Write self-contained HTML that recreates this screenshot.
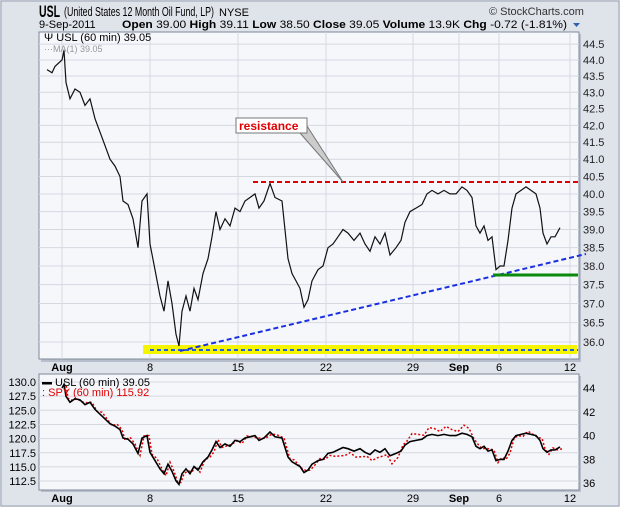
<!DOCTYPE html><html><head><style>
body{margin:0;width:620px;height:507px;background:#dfe3ea;font-family:"Liberation Sans",sans-serif;overflow:hidden}
svg{position:absolute;left:0;top:0}
</style></head><body>
<svg width="620" height="507" id="s" xmlns="http://www.w3.org/2000/svg" font-family="Liberation Sans, sans-serif">
<rect x="0" y="0" width="620" height="507" fill="#dfe3ea"/>
<rect x="1" y="1" width="618" height="505" fill="none" stroke="#9aa3b2"/>
<text x="39" y="17" font-size="17" font-weight="bold" fill="#000" textLength="21" lengthAdjust="spacingAndGlyphs">USL</text>
<text x="64" y="16" font-size="13" fill="#000" textLength="150" lengthAdjust="spacingAndGlyphs">(United States 12 Month Oil Fund, LP)</text>
<text x="219" y="16" font-size="11" fill="#000">NYSE</text>
<text x="489" y="15" font-size="11" fill="#333">© StockCharts.com</text>
<text x="39" y="28" font-size="11">9-Sep-2011</text>
<text x="122" y="28" font-size="11" textLength="445" lengthAdjust="spacingAndGlyphs"><tspan font-weight="bold">Open</tspan> 39.00 <tspan font-weight="bold">High</tspan> 39.11 <tspan font-weight="bold">Low</tspan> 38.50 <tspan font-weight="bold">Close</tspan> 39.05 <tspan font-weight="bold">Volume</tspan> 13.9K <tspan font-weight="bold">Chg</tspan> -0.72 (-1.81%)</text>
<path d="M573 23h7l-3.5 4z" fill="#3060b0"/>
<g id="up"></g>
<g id="lo"></g>
</svg>
<script>
const NS="http://www.w3.org/2000/svg";
function el(p,t,a,txt){const e=document.createElementNS(NS,t);for(const k in a)e.setAttribute(k,a[k]);if(txt!=null)e.textContent=txt;p.appendChild(e);return e;}
const up=document.getElementById('up'),lo=document.getElementById('lo');
const L=39,R=579;
const xs=[[62,'Aug',1],[150,'8'],[238,'15'],[326,'22'],[413,'29'],[459,'Sep',1],[499,'6'],[570,'12']];
el(up,'rect',{x:L+2,y:34,width:R-L,height:328,fill:'#b8bfcc'});
el(up,'rect',{x:L,y:32,width:R-L,height:327,fill:'#f6f7fb',stroke:'#7f8898'});
const Y=p=>5379.4-1405.7*Math.log(p);
for(let p=36;p<=44.51;p+=0.5){const y=Y(p);el(up,'line',{x1:L,x2:R,y1:y,y2:y,stroke:'#d4d8e0'});el(up,'text',{x:583,y:y+4,'font-size':11,fill:'#222'},p.toFixed(1));}
xs.forEach(a=>{el(up,'line',{x1:a[0],x2:a[0],y1:32,y2:359,stroke:'#d4d8e0'});el(up,'text',{x:a[0],y:371,'font-size':11,'text-anchor':'middle','font-weight':a[2]?'bold':'normal'},a[1]);
el(lo,'line',{x1:a[0],x2:a[0],y1:374,y2:490,stroke:'#d4d8e0'});el(lo,'text',{x:a[0],y:502,'font-size':11,'text-anchor':'middle','font-weight':a[2]?'bold':'normal'},a[1]);});
el(up,'rect',{x:143,y:345,width:434,height:9,fill:'#f5f500'});
el(up,'line',{x1:150,x2:578,y1:350,y2:350,stroke:'#2060e0','stroke-width':2,'stroke-dasharray':'4 3'});
const pr=[[47,43.7],[52,43.6],[55,43.8],[62,44.0],[64,44.3],[66,43.3],[70,42.8],[75,43.1],[80,43.0],[85,42.6],[90,42.8],[95,42.2],[100,41.8],[105,41.4],[110,41.0],[115,40.8],[120,40.5],[123,39.8],[128,39.7],[133,39.3],[138,38.5],[142,39.8],[147,40.0],[150,38.6],[155,37.9],[160,37.2],[164,36.8],[168,37.6],[172,37.0],[176,36.2],[179,35.9],[182,36.8],[186,37.2],[190,36.8],[194,37.4],[198,37.1],[203,37.8],[208,38.2],[212,38.8],[216,39.5],[220,39.0],[225,39.3],[230,39.1],[235,39.6],[240,39.5],[245,39.8],[250,39.9],[255,40.0],[259,39.6],[264,39.8],[270,40.3],[275,39.9],[282,39.8],[288,38.2],[292,37.8],[296,37.6],[300,37.4],[304,36.9],[308,37.1],[312,37.6],[318,37.9],[323,38.0],[328,38.5],[333,38.6],[338,38.8],[343,39.0],[348,38.9],[354,38.7],[360,38.9],[365,38.6],[370,38.4],[375,38.8],[380,38.6],[385,38.9],[390,38.3],[396,38.5],[401,38.7],[405,39.2],[410,39.5],[416,39.6],[422,39.7],[427,40.0],[432,40.1],[438,40.0],[444,40.1],[450,40.0],[456,40.0],[462,40.2],[467,40.1],[472,39.9],[476,39.1],[480,38.9],[484,39.1],[488,38.7],[492,38.8],[496,37.9],[500,38.0],[504,38.0],[508,38.7],[512,39.6],[516,40.0],[521,40.1],[526,40.2],[531,40.1],[536,40.0],[540,39.6],[543,38.9],[547,38.6],[551,38.8],[555,38.8],[560,39.05]];
el(up,'polyline',{points:pr.map(q=>q[0]+','+Y(q[1]).toFixed(1)).join(' '),fill:'none',stroke:'#111','stroke-width':1.2});
el(up,'line',{x1:253,x2:578,y1:182,y2:182,stroke:'#e00000','stroke-width':2,'stroke-dasharray':'5 3'});
el(up,'line',{x1:180,x2:586,y1:351,y2:254,stroke:'#1a30e0','stroke-width':2,'stroke-dasharray':'5 3'});
el(up,'line',{x1:493,x2:578,y1:275,y2:275,stroke:'#0a8a0a','stroke-width':3});
el(up,'path',{d:'M300 133L343 182L307 126',fill:'#ccc',stroke:'#777'});
el(up,'rect',{x:236,y:118,width:71,height:15,fill:'#fff',stroke:'#777'});
el(up,'text',{x:239,y:130,'font-size':12,'font-weight':'bold',fill:'#e00000'},'resistance');
el(up,'text',{x:44,y:41,'font-size':11},'\u03A8 USL (60 min) 39.05');
el(up,'text',{x:44,y:52,'font-size':9,fill:'#999'},'\u00B7\u00B7\u00B7MA(1) 39.05');
el(lo,'rect',{x:L+2,y:376,width:R-L,height:116,fill:'#b8bfcc'});
el(lo,'rect',{x:L,y:374,width:R-L,height:116,fill:'#f6f7fb',stroke:'#7f8898'});
const YL=v=>382+(130-v)*5.66;
for(let v=112.5;v<=130.1;v+=2.5){const y=YL(v);el(lo,'line',{x1:L,x2:R,y1:y,y2:y,stroke:'#d4d8e0'});el(lo,'text',{x:36,y:y+4,'font-size':11,'text-anchor':'end'},v.toFixed(1));}
[44,42,40,38,36].forEach(v=>{const y=388+(44-v)*11.9;el(lo,'text',{x:583,y:y+4,'font-size':11},v);});
const YR=p=>388+(44-p)*11.9;
const blk=pr.slice(3).map(q=>q[0]+','+YR(q[1]).toFixed(1)).join(' ');
el(lo,'polyline',{points:pr.slice(3).map((q,i)=>(q[0]+2)+','+(YR(q[1])+ (i%3-1)*2 + (q[0]>330&&q[0]<470? (q[0]<400?6:-6):0)).toFixed(1)).join(' '),fill:'none',stroke:'#e00000','stroke-width':1.5,'stroke-dasharray':'2 2'});
el(lo,'polyline',{points:blk,fill:'none',stroke:'#000','stroke-width':1.6});
el(lo,'rect',{x:42,y:382,width:10,height:2.5,fill:'#000'});
el(lo,'text',{x:55,y:386,'font-size':11},'USL (60 min) 39.05');
el(lo,'text',{x:42,y:396,'font-size':11,fill:'#e00000'},': SPY (60 min) 115.92');
</script>
</body></html>
